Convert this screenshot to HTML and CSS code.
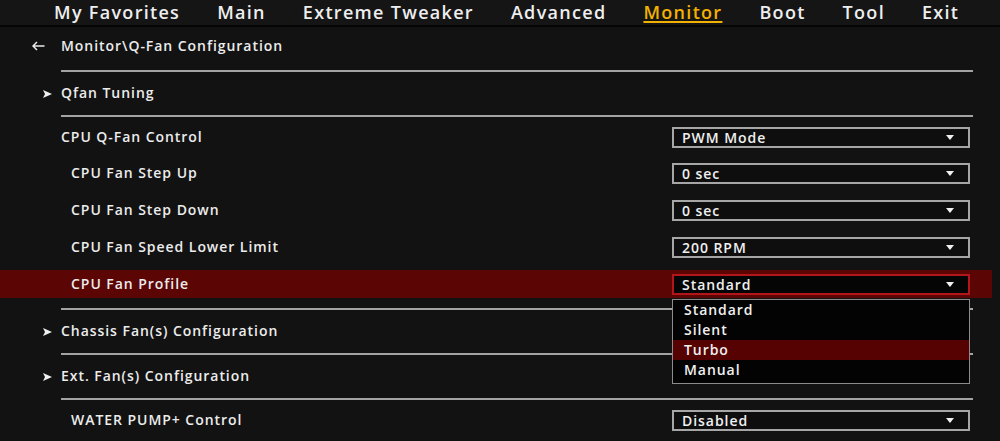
FILE: index.html
```html
<!DOCTYPE html>
<html lang="en">
<head>
    <meta charset="UTF-8">
    <meta name="viewport" content="width=device-width, initial-scale=1.0">
    <title>Monitor - Q-Fan Configuration</title>
    <link rel="stylesheet" href="styles.css">
</head>
<body>
    <nav class="tabs">
        <span class="tab">My Favorites</span>
        <span class="tab">Main</span>
        <span class="tab">Extreme Tweaker</span>
        <span class="tab">Advanced</span>
        <span class="tab active">Monitor</span>
        <span class="tab">Boot</span>
        <span class="tab">Tool</span>
        <span class="tab">Exit</span>
    </nav>

    <div class="page">
        <div class="breadcrumb">
            <svg class="back" width="13" height="10" viewBox="0 0 13 10">
                <path d="M1 5 H12.5 M5 1 L1 5 L5 9" fill="none" stroke="#eaeaea" stroke-width="1.5"/>
            </svg>
            <span class="label">Monitor\Q-Fan Configuration</span>
        </div>
        <div class="divider first"></div>

        <div class="section">
            <svg class="chev" width="9" height="8" viewBox="0 0 9 8">
                <polygon points="0,0 9,4 0,8 2,4" fill="#f0f0f0"/>
            </svg>
            <span class="label">Qfan Tuning</span>
        </div>
        <div class="divider"></div>

        <div class="settings">
            <div class="setting">
                <span class="label">CPU Q-Fan Control</span>
                <div class="select"><span>PWM Mode</span><i class="caret"></i></div>
            </div>
            <div class="setting sub">
                <span class="label">CPU Fan Step Up</span>
                <div class="select"><span>0 sec</span><i class="caret"></i></div>
            </div>
            <div class="setting sub">
                <span class="label">CPU Fan Step Down</span>
                <div class="select"><span>0 sec</span><i class="caret"></i></div>
            </div>
            <div class="setting sub">
                <span class="label">CPU Fan Speed Lower Limit</span>
                <div class="select"><span>200 RPM</span><i class="caret"></i></div>
            </div>
            <div class="setting sub selected">
                <span class="label">CPU Fan Profile</span>
                <div class="select open">
                    <span>Standard</span><i class="caret"></i>
                    <ul class="options">
                        <li>Standard</li>
                        <li>Silent</li>
                        <li class="hover">Turbo</li>
                        <li>Manual</li>
                    </ul>
                </div>
            </div>
        </div>
        <div class="divider gap"></div>

        <div class="section">
            <svg class="chev" width="9" height="8" viewBox="0 0 9 8">
                <polygon points="0,0 9,4 0,8 2,4" fill="#f0f0f0"/>
            </svg>
            <span class="label">Chassis Fan(s) Configuration</span>
        </div>
        <div class="divider"></div>

        <div class="section">
            <svg class="chev" width="9" height="8" viewBox="0 0 9 8">
                <polygon points="0,0 9,4 0,8 2,4" fill="#f0f0f0"/>
            </svg>
            <span class="label">Ext. Fan(s) Configuration</span>
        </div>
        <div class="divider"></div>

        <div class="settings">
            <div class="setting sub">
                <span class="label">WATER PUMP+ Control</span>
                <div class="select"><span>Disabled</span><i class="caret"></i></div>
            </div>
        </div>
    </div>
</body>
</html>
```

FILE: styles.css
```css
* {
    margin: 0;
    padding: 0;
    box-sizing: border-box;
}

body {
    font-family: 'Open Sans', 'Noto Sans', sans-serif;
    font-weight: 600;
    background: #121212;
    color: #ececec;
    width: 1000px;
    height: 441px;
    overflow: hidden;
}

/* top menu */
.tabs {
    display: flex;
    gap: 37px;
    height: 27px;
    padding-left: 54px;
    border-bottom: 2px solid #050505;
    background: #151515;
}

.tab {
    font-size: 18px;
    line-height: 25px;
    letter-spacing: 1.3px;
    color: #eeeeee;
}

.tab.active {
    color: #f2b100;
    text-decoration: underline;
    text-decoration-thickness: 2px;
    text-underline-offset: 2px;
}

/* page body */
.page {
    font-size: 14px;
    letter-spacing: 0.95px;
}

.label {
    padding-bottom: 2px;
}

.breadcrumb {
    display: flex;
    align-items: center;
    height: 38px;
    padding-left: 32px;
}

.breadcrumb .back {
    margin-right: 16px;
}

.divider {
    height: 2px;
    margin: 0 27px 0 61px;
    background: #a3a3a3;
}

.divider.first {
    margin-top: 5px;
}

.divider.gap {
    margin-top: 10px;
}

.section {
    display: flex;
    align-items: center;
    height: 43px;
    padding-left: 43px;
}

.section .chev {
    margin-right: 9px;
}

.settings {
    display: flex;
    flex-direction: column;
    gap: 8.75px;
    padding-top: 6px;
}

.setting {
    display: flex;
    align-items: center;
    justify-content: space-between;
    width: 992px;
    height: 28px;
    padding: 0 22px 0 61px;
}

.setting.sub {
    padding-left: 71px;
}

.setting.selected {
    background: #5b0505;
}

.select {
    position: relative;
    display: flex;
    align-items: center;
    justify-content: space-between;
    width: 298px;
    height: 21px;
    padding: 0 14px 0 8px;
    border: 2px solid #a6a6a6;
    background: #0e0e0e;
    color: #f0f0f0;
    line-height: 17px;
}

.selected .select {
    border-color: #b3161a;
    background: #050505;
}

.caret {
    width: 0;
    height: 0;
    border-left: 4.5px solid transparent;
    border-right: 4.5px solid transparent;
    border-top: 5px solid #f0f0f0;
}

.options {
    position: absolute;
    top: calc(100% + 6px);
    left: -2px;
    width: 298px;
    list-style: none;
    background: #030303;
    border: 1px solid #8c8c8c;
    padding-bottom: 3px;
    z-index: 2;
}

.options li {
    height: 20px;
    line-height: 20px;
    padding-left: 11px;
}

.options li.hover {
    background: #560202;
}
```
